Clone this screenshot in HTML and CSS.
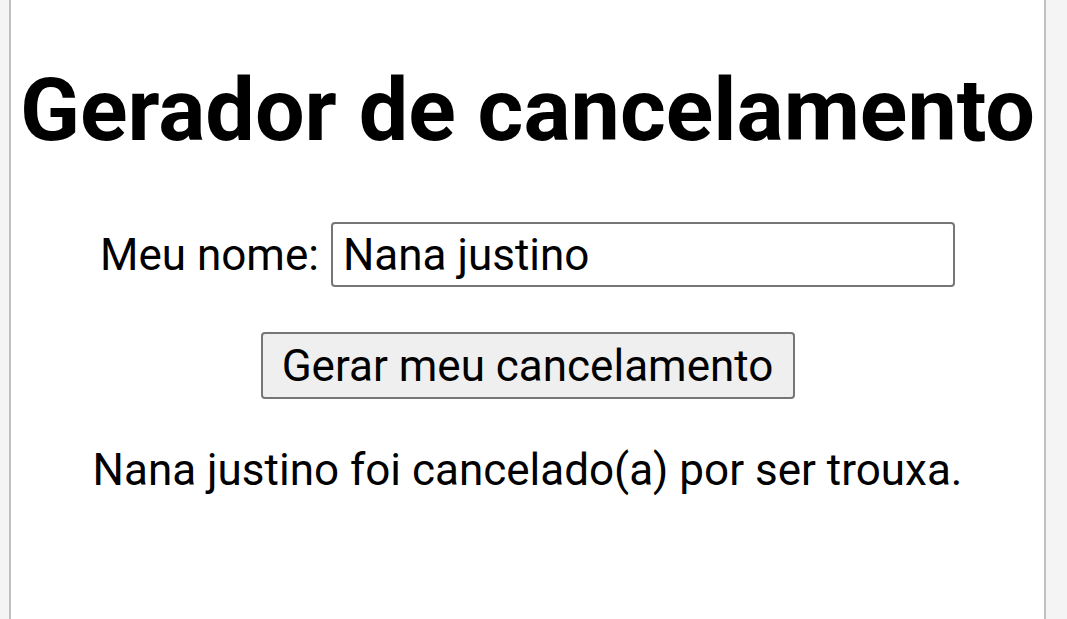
FILE: index.html
```html
<!DOCTYPE html>
<html lang="pt">
<head>
<meta charset="utf-8">
<title>Gerador de cancelamento</title>
<link rel="stylesheet" href="styles.css">
</head>
<body>
<main class="page">
  <h1 class="title">Gerador de cancelamento</h1>
  <div class="row">
    <label class="label" for="nome">Meu nome:</label>
    <input class="field" id="nome" type="text" value="Nana justino">
  </div>
  <div class="row">
    <button class="btn" type="button">Gerar meu cancelamento</button>
  </div>
  <p class="result">Nana justino foi cancelado(a) por ser trouxa.</p>
</main>
</body>
</html>
```
FILE: styles.css
```css
html, body {
  margin: 0;
  padding: 0;
  height: 100%;
  background: #f4f4f4;
  overflow: hidden;
}
body {
  font-family: Roboto, "Noto Sans", sans-serif;
  color: #000;
}
.page {
  margin-left: 9px;
  width: 1037px;
  height: 100%;
  box-sizing: border-box;
  background: #fff;
  border-left: 2px solid #c0c0c0;
  border-right: 2px solid #c0c0c0;
  text-align: center;
  padding-top: 58px;
}
.title {
  margin: 0 0 60px;
  font-size: 88px;
  font-weight: 700;
  line-height: 104px;
}
.row {
  display: flex;
  justify-content: center;
  align-items: center;
  gap: 12px;
  margin-bottom: 45px;
}
.label {
  font-size: 44px;
}
.field {
  width: 624px;
  height: 65px;
  box-sizing: border-box;
  border: 2px solid #767676;
  border-radius: 4px;
  padding: 0 10px;
  font-family: Roboto, sans-serif;
  font-size: 44px;
  color: #000;
  background: #fff;
}
.btn {
  width: 534px;
  height: 67px;
  box-sizing: border-box;
  border: 2px solid #767676;
  border-radius: 4px;
  background: #efefef;
  font-family: Roboto, sans-serif;
  font-size: 44px;
  color: #000;
  padding: 0;
}
.result {
  margin: 0;
  font-size: 44px;
}
```
